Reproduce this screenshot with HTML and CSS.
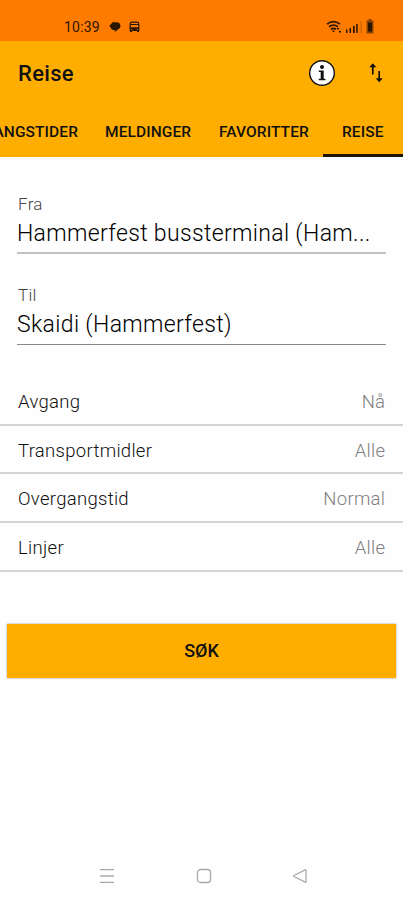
FILE: index.html
```html
<!DOCTYPE html>
<html lang="nb">
<head>
<meta charset="utf-8">
<title>Reise</title>
<link rel="stylesheet" href="styles.css">
</head>
<body>
<div class="status">
  <span class="clock">10:39</span>
  <svg class="bubble" width="12" height="12" viewBox="0 0 12 12"><path d="M3.5 1.2h4a4 4 0 0 1 4 3.8 3.8 3.8 0 0 1-2.600 3.600L5.700 11V9H4.600a3.600 3.600 0 0 1-2.800-2L.3 4.500l.9-.4Z"/></svg>
  <svg class="bus" width="11" height="12" viewBox="0 0 11 12"><path fill="none" stroke="currentColor" stroke-width="1.200" d="M1.200 9.500V3Q1.200 1.200 3 1.200h5Q9.800 1.200 9.800 3v6.500ZM1 3.500h9M1 6.800h9"/><path d="M1 7h9v2.500L8.500 8 7 9.500H4L2.500 8 1 9.500ZM1 9h2v2H1ZM8 9h2v2H8Z"/></svg>
  <span class="space"></span>
  <svg class="wifi" width="17" height="14" viewBox="0 0 17 14"><g fill="none" stroke="currentColor" stroke-width="1.700"><path d="M1 4.200Q7.500-.8 14 4.200"/><path d="M3 6.700q4.500-3.200 9 0"/><path d="M5 9.200q2.500-1.800 5 0"/></g><path d="m6 10.500 1.500 2 1.500-2ZM11 8h2v1.500h-2ZM13 11h2v1.500h-2Z"/></svg>
  <svg class="signal" width="18" height="14" viewBox="0 0 18 14"><path d="M1 9.500h1.500V13H1ZM4.500 8H6v5H4.500ZM8 6h1.700v7H8ZM11.200 4h1.500v9h-1.500Z"/><path opacity=".25" d="M15.500 1.500h1.300V13h-1.300Z"/></svg>
  <svg class="battery" width="8" height="15" viewBox="0 0 8 15"><path opacity=".55" d="M2.500 0h3v1.500H7.500v13H.5v-13h2Z"/><rect x="2" y="3.500" width="4" height="9"/></svg>
</div>
<header>
  <div class="bar">
    <h1>Reise</h1>
    <svg class="info" width="28" height="28" viewBox="0 0 28 28"><circle cx="14" cy="14" r="12.300" fill="#fff" stroke="#111" stroke-width="1.400"/><circle cx="14" cy="8" r="2"/><path d="M10.800 11.500h4.900v8.300h1.800v1.500h-6.700v-1.500h1.900v-6.800h-1.900Z"/></svg>
    <svg class="swap" width="16" height="22" viewBox="0 0 16 22"><path fill="none" stroke="currentColor" stroke-width="1.700" d="M4.800 12.500V4M11.200 9v8"/><path d="M4.800 1.300 8.300 5.300H1.300ZM11.200 20.300 7.700 16.300h7Z"/></svg>
  </div>
  <nav>
    <a class="t1">AVGANGSTIDER</a>
    <a class="t2">MELDINGER</a>
    <a class="t3">FAVORITTER</a>
    <a class="t4 active">REISE</a>
  </nav>
</header>
<main>
  <section class="field soft"><label>Fra</label><div class="value">Hammerfest bussterminal (Ham...</div></section>
  <section class="field"><label>Til</label><div class="value">Skaidi (Hammerfest)</div></section>
  <ul>
    <li><span>Avgang</span><em>Nå</em></li>
    <li><span>Transportmidler</span><em>Alle</em></li>
    <li><span>Overgangstid</span><em>Normal</em></li>
    <li><span>Linjer</span><em>Alle</em></li>
  </ul>
  <button>SØK</button>
</main>
<footer>
  <svg width="16" height="16" viewBox="0 0 16 16"><path d="M1 1.700h14M1 8h14M1 14.300h14"/></svg>
  <svg width="16" height="16" viewBox="0 0 16 16"><rect x="1.500" y="1.500" width="13" height="13" rx="3"/></svg>
  <svg width="16" height="16" viewBox="0 0 16 16"><path d="M14 2.300v11.400q0 .8-.8.400L2 8.500q-.8-.5 0-1L13.200 1.900q.8-.4.800.4Z"/></svg>
</footer>
</body>
</html>
```
FILE: styles.css
```css
* { box-sizing: border-box; }
body {
  margin: 0;
  width: 403px;
  height: 900px;
  overflow: hidden;
  display: flex;
  flex-direction: column;
  background: #fefefe;
  color: #111;
  font-family: Roboto, "Liberation Sans", sans-serif;
}
svg { display: block; flex: none; fill: currentColor; }
.status {
  height: 41px;
  flex: none;
  display: flex;
  align-items: center;
  padding: 12px 29px 0 64px;
  background: #ff7b00;
  color: #2b1600;
}
.clock { width: 45px; font-size: 14px; letter-spacing: .2px; }
.bus { margin-left: 8px; }
.space { flex: 1; }
.signal { margin: 0 3px 0 2px; }
header { height: 116px; flex: none; background: #ffae00; overflow: hidden; }
.bar { height: 64px; display: flex; align-items: center; padding: 0 19px 0 18px; }
h1 { flex: 1; margin: 1px 0 0; font-size: 22px; font-weight: 500; letter-spacing: .3px; }
.info { margin-right: 32px; }
nav {
  height: 52px;
  display: flex;
  font-size: 15.5px;
  font-weight: 500;
  line-height: 54px;
  letter-spacing: .1px;
  white-space: nowrap;
}
.t1 { width: 91px; display: flex; justify-content: flex-end; padding-right: 13px; }
.t2 { width: 114px; padding-left: 14px; }
.t3 { width: 118px; padding-left: 14px; }
.t4 { width: 80px; padding-left: 19px; }
.active { border-bottom: 3px solid #1c1500; }
main { flex: 1; padding-top: 36px; }
.field { height: 61px; margin: 0 17px 30px; border-bottom: 1px solid #888; }
.soft { border-bottom: 2px solid #c2c2c2; }
label { display: block; font-size: 17px; line-height: 23px; color: #444; font-weight: 300; padding-left: 1px; letter-spacing: .3px; }
.value { font-size: 23px; line-height: 35px; font-weight: 300; letter-spacing: .34px; white-space: nowrap; color: #000; }
ul { list-style: none; margin: 0; padding: 2px 0 0; }
li {
  height: 48.700px;
  display: flex;
  justify-content: space-between;
  align-items: center;
  padding: 3px 18px 0;
  border-bottom: 2px solid #d4d4d4;
  font-size: 18.500px;
  font-weight: 350;
  letter-spacing: .3px;
  color: #111;
}
em { font-style: normal; font-weight: 300; color: #808080; margin-right: -.3px; }
button {
  display: block;
  width: 389px;
  height: 54px;
  margin: 52px 7px 0;
  padding: 0;
  border: 0;
  background: #ffae00;
  box-shadow: 0 0 2px #999;
  color: #111;
  font: 500 18px Roboto, sans-serif;
}
footer { height: 49px; display: flex; padding: 17px 95px 0 99px; justify-content: space-between; }
footer svg { fill: none; stroke: #aaa; stroke-width: 1.300; }
```
